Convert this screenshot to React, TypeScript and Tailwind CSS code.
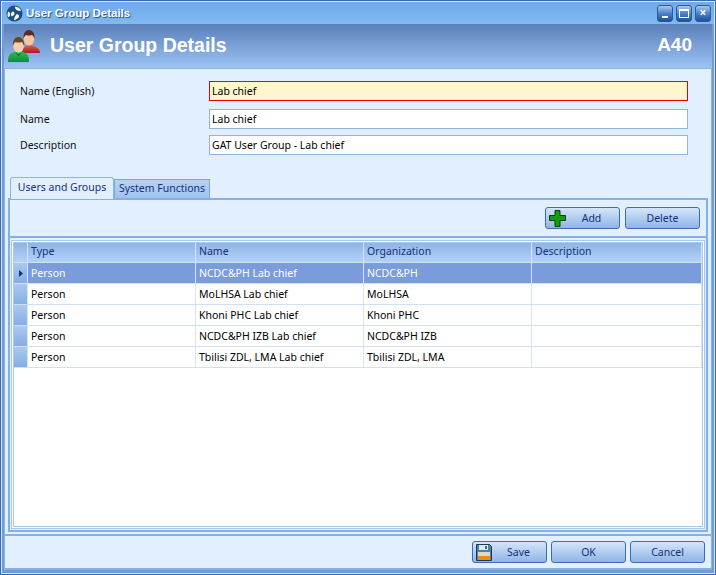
const rows = [
  ["Person", "NCDC&PH Lab chief", "NCDC&PH"],
  ["Person", "MoLHSA Lab chief", "MoLHSA"],
  ["Person", "Khoni PHC Lab chief", "Khoni PHC"],
  ["Person", "NCDC&PH IZB Lab chief", "NCDC&PH IZB"],
  ["Person", "Tbilisi ZDL, LMA Lab chief", "Tbilisi ZDL, LMA"],
];

const colClass = [
  "w-[168px]",
  "w-[168px]",
  "w-[168px]",
  "flex-1",
];

function AppLogo() {
  return (
    <svg width="17" height="17" viewBox="0 0 17 17" className="shrink-0">
      <circle cx="8.5" cy="8.5" r="8" fill="#1d4f86" />
      <path d="M9 1.5c3 .5 5 1.500 6 4-2 1-3 0-4.500-.5C9.500 4 9 3 9 1.500z" fill="#fff" />
      <path d="M2 12c-1-2-.5-4 .5-5.500 1.500 1 2 2.500 1.500 4L3 12z" fill="#e8f2fc" />
      <path d="M6.500 6.500c2 0 2.500 2 1.500 3.500l-2 1.500c-1.500-1-1.500-3.500.5-5z" fill="#fff" />
      <path d="M11 9c1.500.5 2.500 1.500 2 3-1 1.500-3 3-5 3 0-2 1.500-5 3-6z" fill="#fff" />
    </svg>
  );
}

function WinButton({ children }: { children: React.ReactNode }) {
  return (
    <div className="flex h-[17px] w-[16px] items-center justify-center rounded-[3px] border border-[#2a5aa0] bg-gradient-to-b from-[#a9c8ee] via-[#4c82c8] to-[#1f4f9c]">
      {children}
    </div>
  );
}

function UsersIcon() {
  return (
    <svg width="34" height="34" viewBox="0 0 34 34" className="shrink-0">
      <defs>
        <linearGradient id="red" x1="0" y1="0" x2="0" y2="1">
          <stop offset="0" stopColor="#e2584a" />
          <stop offset="1" stopColor="#a81c1c" />
        </linearGradient>
        <linearGradient id="green" x1="0" y1="0" x2="0" y2="1">
          <stop offset="0" stopColor="#34b84e" />
          <stop offset="1" stopColor="#0b8a48" />
        </linearGradient>
      </defs>
      <path d="M15 24c.5-5 3-6.500 5-7.500h5c4 1 8 3 8 7.500z" fill="url(#red)" />
      <ellipse cx="22" cy="9.500" rx="5.500" ry="7" fill="#f6c6a2" />
      <path d="M16.500 10c-.6-6 2.500-9 5.500-9s6.200 3 5.500 9c-.8-2-1.500-3.500-2.500-4-2 .8-4.500.8-6 0-1 .5-1.800 2-2.500 4z" fill="#5a2c1c" />
      <path d="M1 33c0-7 2-9 6-10h9c4 1 6 3 6 10z" fill="url(#green)" />
      <ellipse cx="11.500" cy="16.500" rx="5.500" ry="7" fill="#f8d0b0" />
      <path d="M6 17c-.6-6 2.500-9 5.500-9s6.200 3 5.500 9c-.8-2-1.500-3.500-2.500-4-2 .8-4.500.8-6 0-1 .5-1.800 2-2.500 4z" fill="#6a4424" />
      <path d="M8 23l3.500 2.500L15 23l-3.500 4z" fill="#0a5c2a" />
    </svg>
  );
}

function Field({ label, value, error }: { label: string; value: string; error?: boolean }) {
  return (
    <div className="flex items-center">
      <label className="w-[189px] pt-[2px] text-[#111]">{label}</label>
      <div
        className={
          error
            ? "flex h-[20px] w-[479px] items-center border border-[#e8000c] bg-[#fdf6cf] pt-[1px] pl-[2px] text-black"
            : "flex h-[20px] w-[479px] items-center border border-[#8fb4e0] bg-white pt-[1px] pl-[2px] text-black"
        }
      >
        {value}
      </div>
    </div>
  );
}

function Button({ label, icon }: { label: string; icon?: React.ReactNode }) {
  return (
    <button
      type="button"
      className="relative flex h-[22px] w-[75px] items-center justify-center rounded-[3px] border border-[#3f6cae] bg-gradient-to-b from-[#d5e5f9] to-[#8fb5e6] pt-px text-[#15307c]"
    >
      {icon && <span className="absolute left-[3px] top-[2px]">{icon}</span>}
      <span className={icon ? "pl-[18px]" : ""}>{label}</span>
    </button>
  );
}

function PlusIcon() {
  return (
    <svg width="17" height="17" viewBox="0 0 17 17" className="block">
      <path d="M6 .5h5v5h5.500v5H11v6H6v-6H.5v-5H6z" fill="#0fa012" stroke="#063d06" />
    </svg>
  );
}

function SaveIcon() {
  return (
    <svg width="16" height="17" viewBox="0 0 16 17" className="block">
      <path d="M.5.500h13l2 2v14H.5z" fill="#4f7fa8" stroke="#123a5c" />
      <rect x="3" y="1" width="9" height="5" fill="#dfe8ee" />
      <rect x="9" y="2" width="2" height="3" fill="#3c6a90" />
      <rect x="2" y="8" width="12" height="4" fill="#d8d8d0" />
      <rect x="2" y="12" width="12" height="4" fill="#f08a14" />
    </svg>
  );
}

export default function App() {
  return (
    <div className="h-[575px] w-[716px] overflow-hidden border border-[#3a68b0] bg-[#fff] font-['Noto_Sans',sans-serif] text-[10.5px]">
      <div className="flex h-full flex-col border border-[#d8e6f8] bg-[#6d9cd9] px-[2px] pb-[3px]">
        {/* title bar */}
        <div className="-mx-[2px] flex h-[22px] shrink-0 items-center bg-gradient-to-b from-[#6eaaea] to-[#80baf2] pl-[4px] pr-[3px]">
          <AppLogo />
          <span className="ml-[3px] flex-1 pt-[1px] font-['Liberation_Sans',sans-serif] text-[11.5px] font-bold text-white [text-shadow:1px_1px_1px_#1d4f86]">
            User Group Details
          </span>
          <div className="flex gap-[3px]">
            <WinButton>
              <div className="mt-[8px] h-[2px] w-[6px] bg-white" />
            </WinButton>
            <WinButton>
              <div className="h-[9px] w-[10px] border border-t-[2px] border-white" />
            </WinButton>
            <WinButton>
              <span className="text-[12px] leading-none font-bold text-white">×</span>
            </WinButton>
          </div>
        </div>

        {/* header */}
        <div className="flex h-[44px] shrink-0 items-center bg-gradient-to-b from-[#5b80ba] to-[#9cc3f3] pr-[20px] pl-[3px]">
          <UsersIcon />
          <span className="mb-[1px] ml-[9px] flex-1 font-['Liberation_Sans',sans-serif] text-[19.5px] font-bold text-white">User Group Details</span>
          <span className="mb-[1px] font-['Liberation_Sans',sans-serif] text-[19px] font-bold text-white">A40</span>
        </div>

        {/* form */}
        <div className="flex h-[109px] shrink-0 flex-col border-x border-t border-[#8fb4e0] bg-[#e2effe] pt-[12px] pl-[15px]">
          <div className="mb-[8px]">
            <Field label="Name (English)" value="Lab chief" error />
          </div>
          <div className="mb-[6px]">
            <Field label="Name" value="Lab chief" />
          </div>
          <Field label="Description" value="GAT User Group - Lab chief" />
        </div>

        {/* tabs and panel */}
        <div className="flex min-h-0 flex-1 flex-col border-x border-[#8fb4e0] bg-[#e2effe] px-[3px]">
          <div className="flex h-[21px] shrink-0 items-end pl-[2px]">
            <div className="z-10 -mb-px flex h-[22px] w-[104px] items-center justify-center rounded-t-[3px] border border-b-0 border-[#8fb4e0] bg-[#e2effe] pb-[2px] text-[#15307c]">
              Users and Groups
            </div>
            <div className="flex h-[19px] w-[96px] items-center justify-center border border-b-0 border-[#7ba8de] bg-gradient-to-b from-[#b5d2f5] to-[#a0c4ef] text-[#15307c]">
              System Functions
            </div>
          </div>
          <div className="flex min-h-0 flex-1 flex-col border-2 border-[#85b0e4]">
            <div className="flex h-[38px] shrink-0 items-center justify-end gap-[5px] border-b-2 border-[#85b0e4] pr-[6px]">
              <Button label="Add" icon={<PlusIcon />} />
              <Button label="Delete" />
            </div>
            <div className="flex min-h-0 flex-1 flex-col bg-[#e2effe] px-[1px] pt-[2px] pb-[1px]">
              <div className="flex min-h-0 flex-1 flex-col border-[3px] border-double border-[#a8c8ee] bg-white">
                <div className="flex h-[19px] shrink-0 bg-gradient-to-b from-[#8db5e8] to-[#b4d2f6] text-[#15307c]">
                  <div className="w-[14px] shrink-0 border-r border-[#d5e5f9]" />
                  {["Type", "Name", "Organization", "Description"].map((h, i) => (
                    <div key={h} className={`${colClass[i]} flex items-center border-r border-[#d5e5f9] pb-[1px] pl-[3px]`}>
                      {h}
                    </div>
                  ))}
                </div>
                {rows.map((r, i) => (
                  <div
                    key={r[1]}
                    className={
                      i === 0
                        ? "flex h-[21px] shrink-0 border-t border-[#cfe0f5] bg-[#7a9bdc] text-white"
                        : "flex h-[21px] shrink-0 border-t border-[#cfe0f5] bg-white text-black"
                    }
                  >
                    <div className="flex w-[14px] shrink-0 items-center justify-center border-r border-[#d5e5f9] bg-gradient-to-b from-[#a9c9f0] to-[#86aee3]">
                      {i === 0 && (
                        <svg width="4" height="7" viewBox="0 0 4 7">
                          <path d="M0 0l4 3.500L0 7z" fill="#15307c" />
                        </svg>
                      )}
                    </div>
                    {[...r, ""].map((c, j) => (
                      <div key={j} className={`${colClass[j]} flex items-center border-r border-[#d5e5f9] pt-[1px] pl-[3px]`}>
                        {c}
                      </div>
                    ))}
                  </div>
                ))}
                <div className="h-0 border-t border-[#cfe0f5]" />
              </div>
            </div>
          </div>
          <div className="h-[2px] shrink-0" />
        </div>

        {/* footer */}
        <div className="flex h-[36px] shrink-0 items-center justify-end gap-[4px] border-x border-y-2 border-x-[#8fb4e0] border-y-[#85b0e4] bg-[#e2effe] pr-[6px]">
          <Button label="Save" icon={<SaveIcon />} />
          <Button label="OK" />
          <Button label="Cancel" />
        </div>
      </div>
    </div>
  );
}
